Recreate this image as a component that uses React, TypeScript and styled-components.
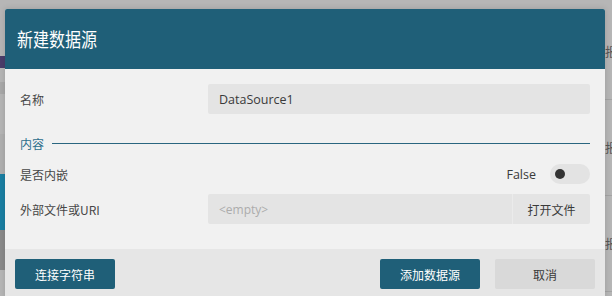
import React, { useState } from 'react';
import styled, { createGlobalStyle } from 'styled-components';

const GlobalStyle = createGlobalStyle`
	html, body {
		margin: 0;
		padding: 0;
		width: 612px;
		height: 296px;
		overflow: hidden;
		background: #b6b6b6;
		font-family: 'Open Sans', 'Noto Sans CJK SC', sans-serif;
	}
`;

/* ── app behind the modal (only edges visible) ── */

const Backdrop = styled.div`
	position: relative;
	width: 612px;
	height: 296px;
	display: flex;
	justify-content: space-between;
	background: #b6b6b6;
	overflow: hidden;
`;

const LeftRail = styled.div`
	width: 6px;
	display: flex;
	flex-direction: column;
	padding-top: 56px;
`;

const RailBlock = styled.div<{ $h: number; $color: string; $mt?: number }>`
	height: ${({ $h }) => $h}px;
	margin-top: ${({ $mt }) => $mt ?? 0}px;
	background: ${({ $color }) => $color};
`;

const RightRail = styled.div`
	width: 7px;
	display: flex;
	flex-direction: column;
	padding-top: 4px;
`;

const RailCell = styled.div`
	height: 95px;
	border-bottom: 1px solid #a4a4a4;
	color: #555;
	font-size: 12px;
	display: flex;
	align-items: center;
	font-family: 'Noto Sans CJK SC', sans-serif;
	white-space: nowrap;
	overflow: hidden;
`;

/* ── dialog ── */

const Dialog = styled.div`
	position: absolute;
	top: 9px;
	left: 5px;
	width: 600px;
	background: #f1f1f1;
	border-radius: 2px 2px 0 0;
	box-shadow: 0 0 6px rgba(0, 0, 0, 0.15);
	display: flex;
	flex-direction: column;
`;

const Header = styled.div`
	height: 60px;
	background: #1f5f78;
	border-radius: 2px 2px 0 0;
	display: flex;
	align-items: center;
	padding: 0 12px;
`;

const Title = styled.h1`
	margin: 0;
	color: #fff;
	font-family: 'Noto Sans CJK SC', sans-serif;
	font-weight: 400;
	font-size: 16px;
	transform: scaleY(1.2);
`;

const Body = styled.div`
	padding: 15px 15px 25px;
	display: flex;
	flex-direction: column;
`;

const Row = styled.div<{ $mt?: number }>`
	display: grid;
	grid-template-columns: 188px 1fr;
	align-items: center;
	height: 30px;
	margin-top: ${({ $mt }) => $mt ?? 0}px;
`;

const Label = styled.span`
	font-size: 12px;
	color: #474747;
	font-family: 'Noto Sans CJK SC', sans-serif;
`;

const Field = styled.div`
	height: 30px;
	background: #e4e4e4;
	border-radius: 2px;
	display: flex;
	align-items: center;
	padding: 0 11px;
	font-size: 12.5px;
	color: #3a3a3a;
`;

const Placeholder = styled.span`
	color: #acacac;
	font-size: 12px;
`;

const FileGroup = styled.div`
	display: flex;
	height: 30px;
`;

const FileField = styled(Field)`
	flex: 1;
	border-radius: 2px 0 0 2px;
`;

const FileButton = styled.button`
	width: 78px;
	border: none;
	border-left: 1px solid #ebebeb;
	background: #e4e4e4;
	border-radius: 0 2px 2px 0;
	font-family: 'Noto Sans CJK SC', sans-serif;
	font-size: 12px;
	color: #3a3a3a;
	padding: 0;
`;

const Section = styled.div`
	display: flex;
	align-items: center;
	gap: 8px;
	height: 20px;
	margin-top: 19px;
	margin-bottom: 6px;
`;

const SectionTitle = styled.span`
	font-size: 12px;
	color: #2c6e8c;
	font-family: 'Noto Sans CJK SC', sans-serif;
`;

const SectionLine = styled.div`
	flex: 1;
	height: 1px;
	background: #2a6680;
`;

const ToggleCell = styled.div`
	display: flex;
	justify-content: flex-end;
	align-items: center;
	gap: 14px;
`;

const ToggleText = styled.span`
	font-size: 12.5px;
	color: #3a3a3a;
`;

const Track = styled.button<{ $on: boolean }>`
	width: 40px;
	height: 20px;
	border: none;
	border-radius: 10px;
	background: ${({ $on }) => ($on ? '#1f5f78' : '#e3e3e3')};
	display: flex;
	align-items: center;
	justify-content: ${({ $on }) => ($on ? 'flex-end' : 'flex-start')};
	padding: 0 5px;
	cursor: pointer;
`;

const Knob = styled.span<{ $on: boolean }>`
	width: 10px;
	height: 10px;
	border-radius: 50%;
	background: ${({ $on }) => ($on ? '#fff' : '#333')};
`;

const Footer = styled.div`
	background: #e6e6e6;
	padding: 10px;
	display: flex;
	align-items: center;
	gap: 15px;
`;

const Spacer = styled.div`
	flex: 1;
`;

const Button = styled.button<{ $primary?: boolean }>`
	width: 100px;
	height: 30px;
	border: none;
	border-radius: 2px;
	font-family: 'Noto Sans CJK SC', sans-serif;
	font-size: 12px;
	color: ${({ $primary }) => ($primary ? '#fff' : '#3a3a3a')};
	background: ${({ $primary }) => ($primary ? '#1f5f78' : '#d9d9d9')};
	padding: 0;
	cursor: pointer;
`;

export default function App() {
	const [embedded, setEmbedded] = useState(false);

	return (
		<>
			<GlobalStyle />
			<Backdrop>
				<LeftRail>
					<RailBlock $h={12} $color="#4a3d6b" />
					<RailBlock $h={12} $color="#a9a9a9" $mt={14} />
					<RailBlock $h={40} $color="#b0b0b0" $mt={40} />
					<RailBlock $h={56} $color="#1a7fa3" />
					<RailBlock $h={40} $color="#8a8a8a" />
				</LeftRail>
				<RightRail>
					<RailCell>报</RailCell>
					<RailCell>报</RailCell>
					<RailCell>报</RailCell>
				</RightRail>

				<Dialog>
					<Header>
						<Title>新建数据源</Title>
					</Header>
					<Body>
						<Row>
							<Label>名称</Label>
							<Field>DataSource1</Field>
						</Row>
						<Section>
							<SectionTitle>内容</SectionTitle>
							<SectionLine />
						</Section>
						<Row>
							<Label>是否内嵌</Label>
							<ToggleCell>
								<ToggleText>{embedded ? 'True' : 'False'}</ToggleText>
								<Track $on={embedded} onClick={() => setEmbedded(!embedded)}>
									<Knob $on={embedded} />
								</Track>
							</ToggleCell>
						</Row>
						<Row $mt={5}>
							<Label>外部文件或URI</Label>
							<FileGroup>
								<FileField>
									<Placeholder>&lt;empty&gt;</Placeholder>
								</FileField>
								<FileButton>打开文件</FileButton>
							</FileGroup>
						</Row>
					</Body>
					<Footer>
						<Button $primary>连接字符串</Button>
						<Spacer />
						<Button $primary>添加数据源</Button>
						<Button>取消</Button>
					</Footer>
				</Dialog>
			</Backdrop>
		</>
	);
}
